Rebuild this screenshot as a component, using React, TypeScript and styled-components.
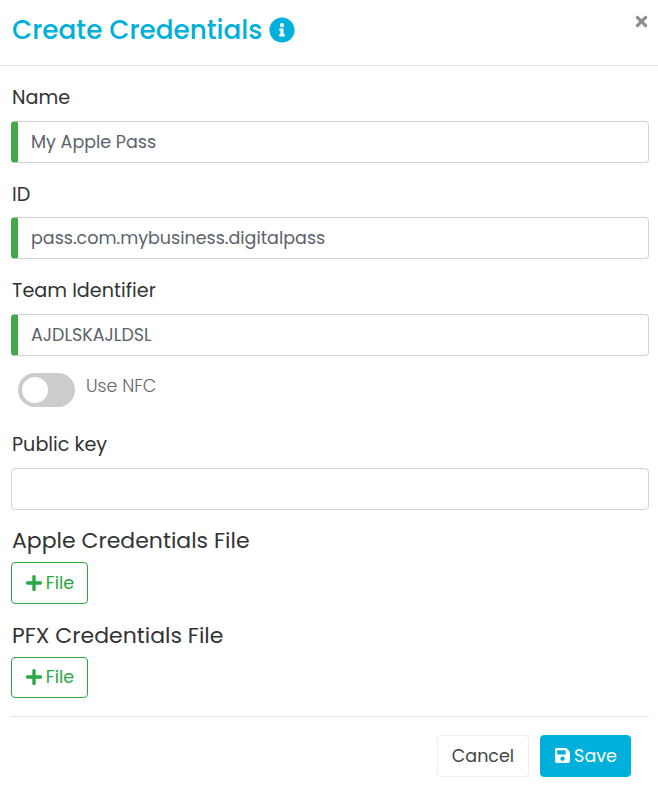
import React from 'react';
import styled, { createGlobalStyle } from 'styled-components';
import { FaInfoCircle, FaPlus, FaSave, FaTimes } from 'react-icons/fa';

const GlobalStyle = createGlobalStyle`
  html, body {
    margin: 0;
    background: #fff;
    font-family: Poppins, Lato, "Open Sans", sans-serif;
  }
  * { box-sizing: border-box; }
`;

const Modal = styled.div`
  width: 658px;
  height: 803px;
  overflow: hidden;
  background: #fff;
`;

const Header = styled.header`
  height: 66px;
  padding: 11px 8px 0 12px;
  display: flex;
  align-items: flex-start;
  justify-content: space-between;
  border-bottom: 1px solid #e4e4e4;
`;

const Title = styled.h1`
  margin: 0;
  display: flex;
  align-items: center;
  gap: 7px;
  font-size: 26.25px;
  line-height: 37px;
  font-weight: 500;
  color: #00b0dc;
  svg { font-size: 26px; }
`;

const Close = styled.span`
  margin-top: 2px;
  color: #8c8c8c;
  font-size: 17px;
  display: flex;
`;

const Body = styled.div`
  padding: 19px 9px 0 11px;
  display: flex;
  flex-direction: column;
`;

const Label = styled.label`
  display: block;
  padding-left: 1px;
  font-size: 19.2px;
  line-height: 26px;
  color: #333;
  margin-bottom: 9.8px;
`;

const Field = styled.div<{ $gap?: number }>`
  margin-bottom: ${p => p.$gap ?? 18.8}px;
`;

const Input = styled.div<{ $valid?: boolean }>`
  height: 42px;
  border: 1px solid #ced4da;
  border-left: ${p => (p.$valid ? '7px solid #43a84a' : '1px solid #ced4da')};
  border-radius: 4px;
  padding-left: ${p => (p.$valid ? '13px' : '19px')};
  display: flex;
  align-items: center;
  font-size: 17.5px;
  color: #5c636a;
`;

const SwitchRow = styled.div`
  display: flex;
  align-items: flex-start;
  gap: 11px;
  padding-left: 7px;
  margin-bottom: 25px;
`;

const Track = styled.div`
  width: 57px;
  height: 34px;
  border-radius: 17px;
  background: #ccc;
  padding: 4px;
`;

const Knob = styled.div`
  width: 26px;
  height: 26px;
  border-radius: 50%;
  background: #fff;
`;

const SwitchText = styled.span`
  font-size: 17.5px;
  line-height: 26px;
  color: #666;
  font-weight: 300;
`;

const FileTitle = styled.h2`
  margin: 1px 0 6px;
  padding-left: 1px;
  font-size: 22px;
  line-height: 31px;
  font-weight: 400;
  color: #333;
`;

const FileButton = styled.button<{ $short?: boolean }>`
  width: 77px;
  height: ${p => (p.$short ? 41 : 42)}px;
  padding: 0;
  display: flex;
  align-items: center;
  justify-content: center;
  gap: 3px;
  background: #fff;
  border: 1px solid #28a745;
  border-radius: 4px;
  color: #28a745;
  font: inherit;
  font-size: 17.5px;
  margin-bottom: 15px;
`;

const Footer = styled.footer`
  margin: 3px 9px 0 11px;
  padding: 18px 18px 0 0;
  border-top: 1px solid #e4e4e4;
  display: flex;
  justify-content: flex-end;
  gap: 11px;
`;

const FooterButton = styled.button<{ $primary?: boolean }>`
  height: 42px;
  width: ${p => (p.$primary ? 91 : 92)}px;
  padding: 0;
  display: flex;
  align-items: center;
  justify-content: center;
  gap: 3px;
  font: inherit;
  font-size: 17.5px;
  border-radius: 4px;
  border: 1px solid ${p => (p.$primary ? '#00b0dc' : '#eee')};
  background: ${p => (p.$primary ? '#00b0dc' : '#fff')};
  color: ${p => (p.$primary ? '#fff' : '#444')};
`;

export default function App() {
  return (
    <Modal>
      <GlobalStyle />
      <Header>
        <Title>
          Create Credentials <FaInfoCircle />
        </Title>
        <Close><FaTimes /></Close>
      </Header>
      <Body>
        <Field>
          <Label>Name</Label>
          <Input $valid>My Apple Pass</Input>
        </Field>
        <Field>
          <Label>ID</Label>
          <Input $valid>pass.com.mybusiness.digitalpass</Input>
        </Field>
        <Field $gap={17}>
          <Label>Team Identifier</Label>
          <Input $valid>AJDLSKAJLDSL</Input>
        </Field>
        <SwitchRow>
          <Track><Knob /></Track>
          <SwitchText>Use NFC</SwitchText>
        </SwitchRow>
        <Field $gap={14.2}>
          <Label>Public key</Label>
          <Input />
        </Field>
        <FileTitle>Apple Credentials File</FileTitle>
        <FileButton><FaPlus size={18} />File</FileButton>
        <FileTitle>PFX Credentials File</FileTitle>
        <FileButton $short><FaPlus size={18} />File</FileButton>
      </Body>
      <Footer>
        <FooterButton>Cancel</FooterButton>
        <FooterButton $primary><FaSave size={17} />Save</FooterButton>
      </Footer>
    </Modal>
  );
}
